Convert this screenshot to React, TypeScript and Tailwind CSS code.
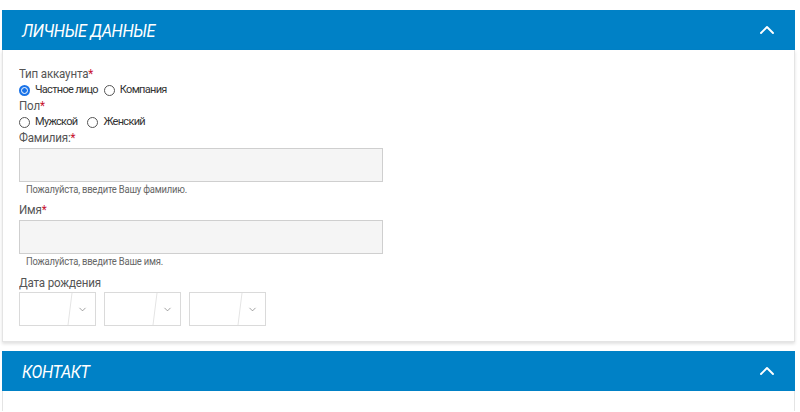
import React from 'react';
import { ChevronUp, ChevronDown } from 'lucide-react';

const font = { fontFamily: 'Roboto, "Liberation Sans", sans-serif' };

const Header = ({ title }: { title: string }) => (
  <div className="h-10 bg-[#0081c6] flex items-center justify-between pl-[20px] pr-[16px]">
    <h2 className="inline-block origin-left scale-x-[0.9] text-white italic text-[18px] tracking-[-0.4px] uppercase whitespace-nowrap">
      {title}
    </h2>
    <ChevronUp className="w-6 h-6 text-white" strokeWidth={1.9} />
  </div>
);

const Label = ({ text, star = true, className = '' }: { text: string; star?: boolean; className?: string }) => (
  <div className={`flex h-4 ${className}`}>
    <span className="block origin-left scale-x-[0.89] whitespace-nowrap text-[13px] leading-4 text-[#555] tracking-[-0.2px]">
      {text}
      {star && <span className="text-[#c8102e]">*</span>}
    </span>
  </div>
);

const Radio = ({ label, checked = false }: { label: string; checked?: boolean }) => (
  <label className="flex items-center gap-[5px] mr-[6px]">
    {checked ? (
      <span className="w-[11px] h-[11px] rounded-full bg-[#1a73e8] flex items-center justify-center">
        <span className="w-[7px] h-[7px] rounded-full border-[1.5px] border-white bg-[#1a73e8]" />
      </span>
    ) : (
      <span className="w-[11px] h-[11px] rounded-full border border-[#555] bg-white" />
    )}
    <span className="text-[11px] leading-4 text-[#333] tracking-[-0.7px]">{label}</span>
  </label>
);

const Help = ({ text }: { text: string }) => (
  <div className="flex mt-[1px] pl-[7px] h-[14px]">
    <span className="block origin-left scale-x-[0.94] whitespace-nowrap text-[10px] leading-[14px] text-[#666] tracking-[-0.2px]">
      {text}
    </span>
  </div>
);

const Select = () => (
  <div className="relative w-[77px] h-[34px] border border-[#dadada] bg-white">
    <svg className="absolute left-[47px] top-0" width="6" height="32">
      <line x1="5" y1="0" x2="1" y2="32" stroke="#e4e4e4" strokeWidth="1" />
    </svg>
    <ChevronDown className="absolute left-[57px] top-[11px] w-[11px] h-[11px] text-[#777]" strokeWidth={1.5} />
  </div>
);

export default function App() {
  return (
    <div className="min-h-[412px] bg-white pl-[2px] pr-[5px] pt-[10px]" style={font}>
      {/* Personal data */}
      <Header title="Личные данные" />
      <div className="bg-white border-x border-b border-[#e4e4e4] shadow-[0_2px_3px_rgba(0,0,0,0.12)] px-[16px] pt-[16px] pb-[15px]">
        <Label text="Тип аккаунта" />
        <div className="flex h-4 items-center">
          <Radio label="Частное лицо" checked />
          <Radio label="Компания" />
        </div>
        <Label text="Пол" />
        <div className="flex h-4 items-center">
          <Radio label="Мужской" />
          <span className="w-[4px]" />
          <Radio label="Женский" />
        </div>
        <Label text="Фамилия:" />
        <div className="mt-[2px] w-[364px] h-[34px] bg-[#f5f5f5] border border-[#cfcfcf]" />
        <Help text="Пожалуйста, введите Вашу фамилию." />
        <Label text="Имя" className="mt-[5px]" />
        <div className="mt-[2px] w-[364px] h-[34px] bg-[#f5f5f5] border border-[#cfcfcf]" />
        <Help text="Пожалуйста, введите Ваше имя." />
        <Label text="Дата рождения" star={false} className="mt-[6px]" />
        <div className="mt-[1px] flex gap-2">
          <Select />
          <Select />
          <Select />
        </div>
      </div>

      {/* Contact */}
      <div className="mt-[9px]">
        <Header title="Контакт" />
        <div className="h-5 border-x border-[#e4e4e4] bg-white" />
      </div>
    </div>
  );
}
